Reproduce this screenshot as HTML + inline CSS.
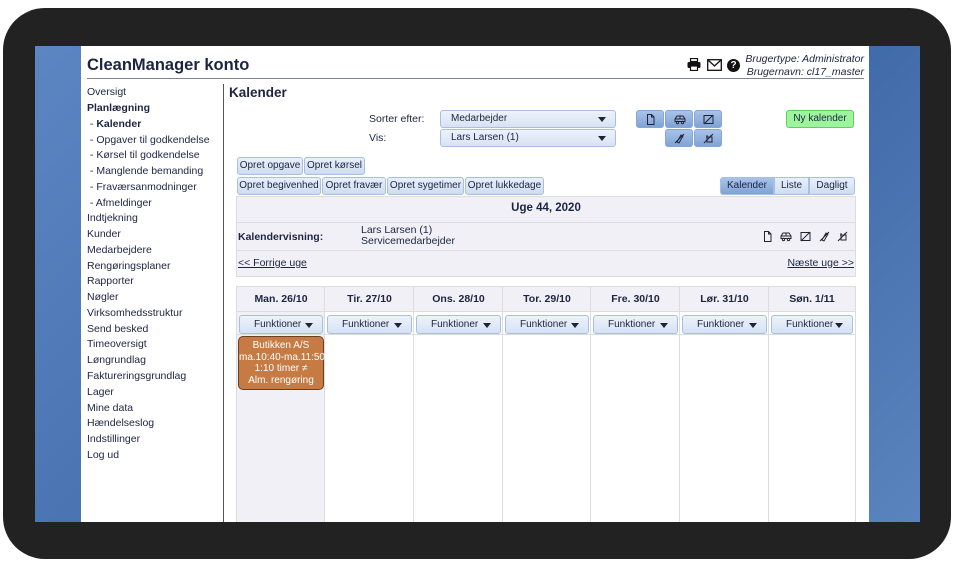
<!DOCTYPE html>
<html><head><meta charset="utf-8"><style>
*{box-sizing:border-box;margin:0;padding:0}
body{width:954px;height:567px;background:#fff;position:relative;overflow:hidden;font-family:"Liberation Sans",sans-serif;color:#1c2540;font-size:10.5px}
.a{position:absolute}
#frame{left:3px;top:8px;width:948px;height:551px;background:#222;border-radius:42px}
#screen{left:35px;top:46px;width:885px;height:476px;background:linear-gradient(135deg,#5b86c2,#3f6aa8 60%,#5a84bd)}
#page{left:81px;top:46px;width:788px;height:476px;background:#fff}
.nav div{position:absolute;left:87px;font-size:10.5px;white-space:pre}
.btn{position:absolute;background:linear-gradient(#e8f0fb,#cfdcf0);border:1px solid #a9bfdf;border-radius:3px;font-size:10px;text-align:center;line-height:16px;height:18px;white-space:nowrap}
.ib{position:absolute;background:linear-gradient(#a9c3e8,#7fa3d6);border:1px solid #86a6d6;border-radius:3px;height:18px;width:28px}
.ib svg{position:absolute;left:8px;top:3px}
.sel{position:absolute;left:440px;width:176px;height:18px;border:1px solid #a9bfdf;border-radius:3px;background:linear-gradient(#eef3fb,#d7e2f3);font-size:10px;line-height:16px;padding-left:10px}
.sel:after,.fn:after{content:"";position:absolute;right:9px;top:6px;border:4px solid transparent;border-top:5px solid #223;}
.col{position:absolute;top:286px;height:236px;border-left:1px solid #ddd;border-top:1px solid #ddd}
.hd{height:25px;border-bottom:1px solid #ddd;text-align:center;font-weight:bold;font-size:10.5px;line-height:24px;background:#f0f0f6}
.fn{position:absolute;top:28px;left:2px;right:2px;height:19px;border:1px solid #a9bfdf;border-radius:3px;background:linear-gradient(#eef3fb,#d5e1f3);font-size:10px;line-height:17px;padding-left:14px}
.fn:after{top:7px}
svg{fill:none;stroke:#223;stroke-width:1}
</style></head><body>
<div class="a" id="frame"></div>
<div class="a" id="screen"></div>
<div class="a" id="page"></div>
<div class="a" style="left:87px;top:56px;font-size:16.5px;font-weight:bold">CleanManager konto</div>
<div class="a" style="left:87px;top:78px;width:777px;height:1px;background:#7d8594"></div>
<svg class="a" style="left:687px;top:58px" width="14" height="13" viewBox="0 0 14 13"><rect x="3.5" y="0.5" width="7" height="3" style="fill:none;stroke:#111;stroke-width:1.2"/><rect x="0.5" y="4" width="13" height="6" rx="1.5" style="fill:#111;stroke:none"/><rect x="3.5" y="8" width="7" height="4.5" style="fill:#fff;stroke:#111;stroke-width:1.2"/></svg>
<svg class="a" style="left:707px;top:59px" width="15" height="12" viewBox="0 0 15 12"><rect x="0.7" y="0.7" width="13.6" height="10.6" style="stroke:#111;stroke-width:1.3"/><path d="M1 1 L7.5 7 L14 1" style="stroke:#111;stroke-width:1.3"/></svg>
<div class="a" style="left:727px;top:59px;width:13px;height:13px;border-radius:50%;background:#111;color:#fff;font-size:10px;font-weight:bold;text-align:center;line-height:13px">?</div>
<div class="a" style="right:90px;top:53px;font-size:10.5px;font-style:italic;text-align:right;line-height:13px">Brugertype: Administrator<br>Brugernavn: cl17_master</div>
<div class="nav">
<div style="top:86px">Oversigt</div>
<div style="top:102px;font-weight:bold">Planlægning</div>
<div style="top:118px"> - <b>Kalender</b></div>
<div style="top:134px"> - Opgaver til godkendelse</div>
<div style="top:149px"> - Kørsel til godkendelse</div>
<div style="top:165px"> - Manglende bemanding</div>
<div style="top:181px"> - Fraværsanmodninger</div>
<div style="top:197px"> - Afmeldinger</div>
<div style="top:212px">Indtjekning</div>
<div style="top:228px">Kunder</div>
<div style="top:244px">Medarbejdere</div>
<div style="top:260px">Rengøringsplaner</div>
<div style="top:275px">Rapporter</div>
<div style="top:291px">Nøgler</div>
<div style="top:307px">Virksomhedsstruktur</div>
<div style="top:323px">Send besked</div>
<div style="top:338px">Timeoversigt</div>
<div style="top:354px">Løngrundlag</div>
<div style="top:370px">Faktureringsgrundlag</div>
<div style="top:386px">Lager</div>
<div style="top:402px">Mine data</div>
<div style="top:417px">Hændelseslog</div>
<div style="top:433px">Indstillinger</div>
<div style="top:449px">Log ud</div>
</div>
<div class="a" style="left:223px;top:84px;width:1px;height:438px;background:#555"></div>
<div class="a" style="left:229px;top:85px;font-size:13.5px;font-weight:bold">Kalender</div>
<div class="a" style="left:369px;top:113px">Sorter efter:</div>
<div class="a" style="left:369px;top:132px">Vis:</div>
<div class="sel" style="top:110px">Medarbejder</div>
<div class="sel" style="top:129px">Lars Larsen (1)</div>
<div class="ib" style="left:636px;top:110px"><svg width="11" height="11"><path d="M2.5 .5h4l2.5 2.5v7.5h-6.5z M6.5 .5v2.5h2.5"/></svg></div>
<div class="ib" style="left:665px;top:110px"><svg width="12" height="11"><path d="M1 7.5v-2.5l2-3h6l2 3v2.5z M1 5h10 M6 2v3"/><circle cx="3.5" cy="8.5" r="1.2"/><circle cx="8.5" cy="8.5" r="1.2"/></svg></div>
<div class="ib" style="left:694px;top:110px"><svg width="11" height="11"><rect x="1" y="1.5" width="9" height="8"/><path d="M1 10 L10 1"/></svg></div>
<div class="ib" style="left:665px;top:129px"><svg width="11" height="11"><path d="M3 9 L7 2 L9 3 L5 10 z M1 10 L10 1"/></svg></div>
<div class="ib" style="left:694px;top:129px"><svg width="11" height="11"><path d="M3 4h6v5h-5v-5 M4 4v-2 M8 4v-2 M1 10 L10 1"/></svg></div>
<div class="btn" style="left:786px;top:110px;width:68px;background:#9cf59c;border-color:#6c6">Ny kalender</div>
<div class="btn" style="left:237px;top:157px;width:66px">Opret opgave</div>
<div class="btn" style="left:304px;top:157px;width:61px">Opret kørsel</div>
<div class="btn" style="left:237px;top:177px;width:84px">Opret begivenhed</div>
<div class="btn" style="left:322px;top:177px;width:64px">Opret fravær</div>
<div class="btn" style="left:387px;top:177px;width:77px">Opret sygetimer</div>
<div class="btn" style="left:465px;top:177px;width:79px">Opret lukkedage</div>
<div class="btn" style="left:720px;top:177px;width:54px;background:linear-gradient(#a9c3e8,#7fa3d6);border-radius:3px 0 0 3px">Kalender</div>
<div class="btn" style="left:774px;top:177px;width:35px;border-radius:0">Liste</div>
<div class="btn" style="left:809px;top:177px;width:46px;border-radius:0 3px 3px 0">Dagligt</div>
<div class="a" style="left:236px;top:196px;width:620px;height:81px;background:#f0f0f6;border:1px solid #ddd"></div>
<div class="a" style="left:236px;top:222px;width:620px;height:1px;background:#ddd"></div>
<div class="a" style="left:236px;top:250px;width:620px;height:1px;background:#ddd"></div>
<div class="a" style="left:236px;top:202px;width:620px;text-align:center;font-weight:bold;font-size:11.5px">Uge 44, 2020</div>
<div class="a" style="left:238px;top:231px;font-weight:bold">Kalendervisning:</div>
<div class="a" style="left:361px;top:225px;line-height:11px">Lars Larsen (1)<br>Servicemedarbejder</div>
<svg class="a" style="left:762px;top:231px" width="90" height="11"><path d="M2.5 .5h4l2.5 2.5v7.5h-6.5z M6.5 .5v2.5h2.5"/><g transform="translate(18,0)"><path d="M1 7.5v-2.5l2-3h6l2 3v2.5z M1 5h10 M6 2v3"/><circle cx="3.5" cy="8.5" r="1.2"/><circle cx="8.5" cy="8.5" r="1.2"/></g><g transform="translate(38,0)"><rect x="1" y="1.5" width="9" height="8"/><path d="M1 10 L10 1"/></g><g transform="translate(57,0)"><path d="M3 9 L7 2 L9 3 L5 10 z M1 10 L10 1"/></g><g transform="translate(75,0)"><path d="M3 4h6v5h-5v-5 M4 4v-2 M8 4v-2 M1 10 L10 1"/></g></svg>
<div class="a" style="left:238px;top:257px;text-decoration:underline">&lt;&lt; Forrige uge</div>
<div class="a" style="right:100px;top:257px;text-decoration:underline">Næste uge &gt;&gt;</div>
<div class="col" style="left:236px;width:89px;background:#f0f0f6"><div class="hd">Man. 26/10</div><div class="fn">Funktioner</div></div>
<div class="col" style="left:324px;width:90px"><div class="hd">Tir. 27/10</div><div class="fn">Funktioner</div></div>
<div class="col" style="left:413px;width:90px"><div class="hd">Ons. 28/10</div><div class="fn">Funktioner</div></div>
<div class="col" style="left:502px;width:89px"><div class="hd">Tor. 29/10</div><div class="fn">Funktioner</div></div>
<div class="col" style="left:590px;width:90px"><div class="hd">Fre. 30/10</div><div class="fn">Funktioner</div></div>
<div class="col" style="left:679px;width:90px"><div class="hd">Lør. 31/10</div><div class="fn">Funktioner</div></div>
<div class="col" style="left:768px;width:88px;border-right:1px solid #ddd"><div class="hd">Søn. 1/11</div><div class="fn">Funktioner</div></div>
<div class="a" style="left:236px;top:334px;width:620px;height:1px;background:#ddd"></div>
<div class="a" style="left:238px;top:336px;width:86px;height:54px;background:#c67b45;border:1px solid #6a4020;border-radius:5px;color:#fff;font-size:10px;text-align:center;line-height:11.5px;padding-top:3px;white-space:nowrap">Butikken A/S<br>ma.10:40-ma.11:50<br>1:10 timer ≠<br>Alm. rengøring</div>
</body></html>
